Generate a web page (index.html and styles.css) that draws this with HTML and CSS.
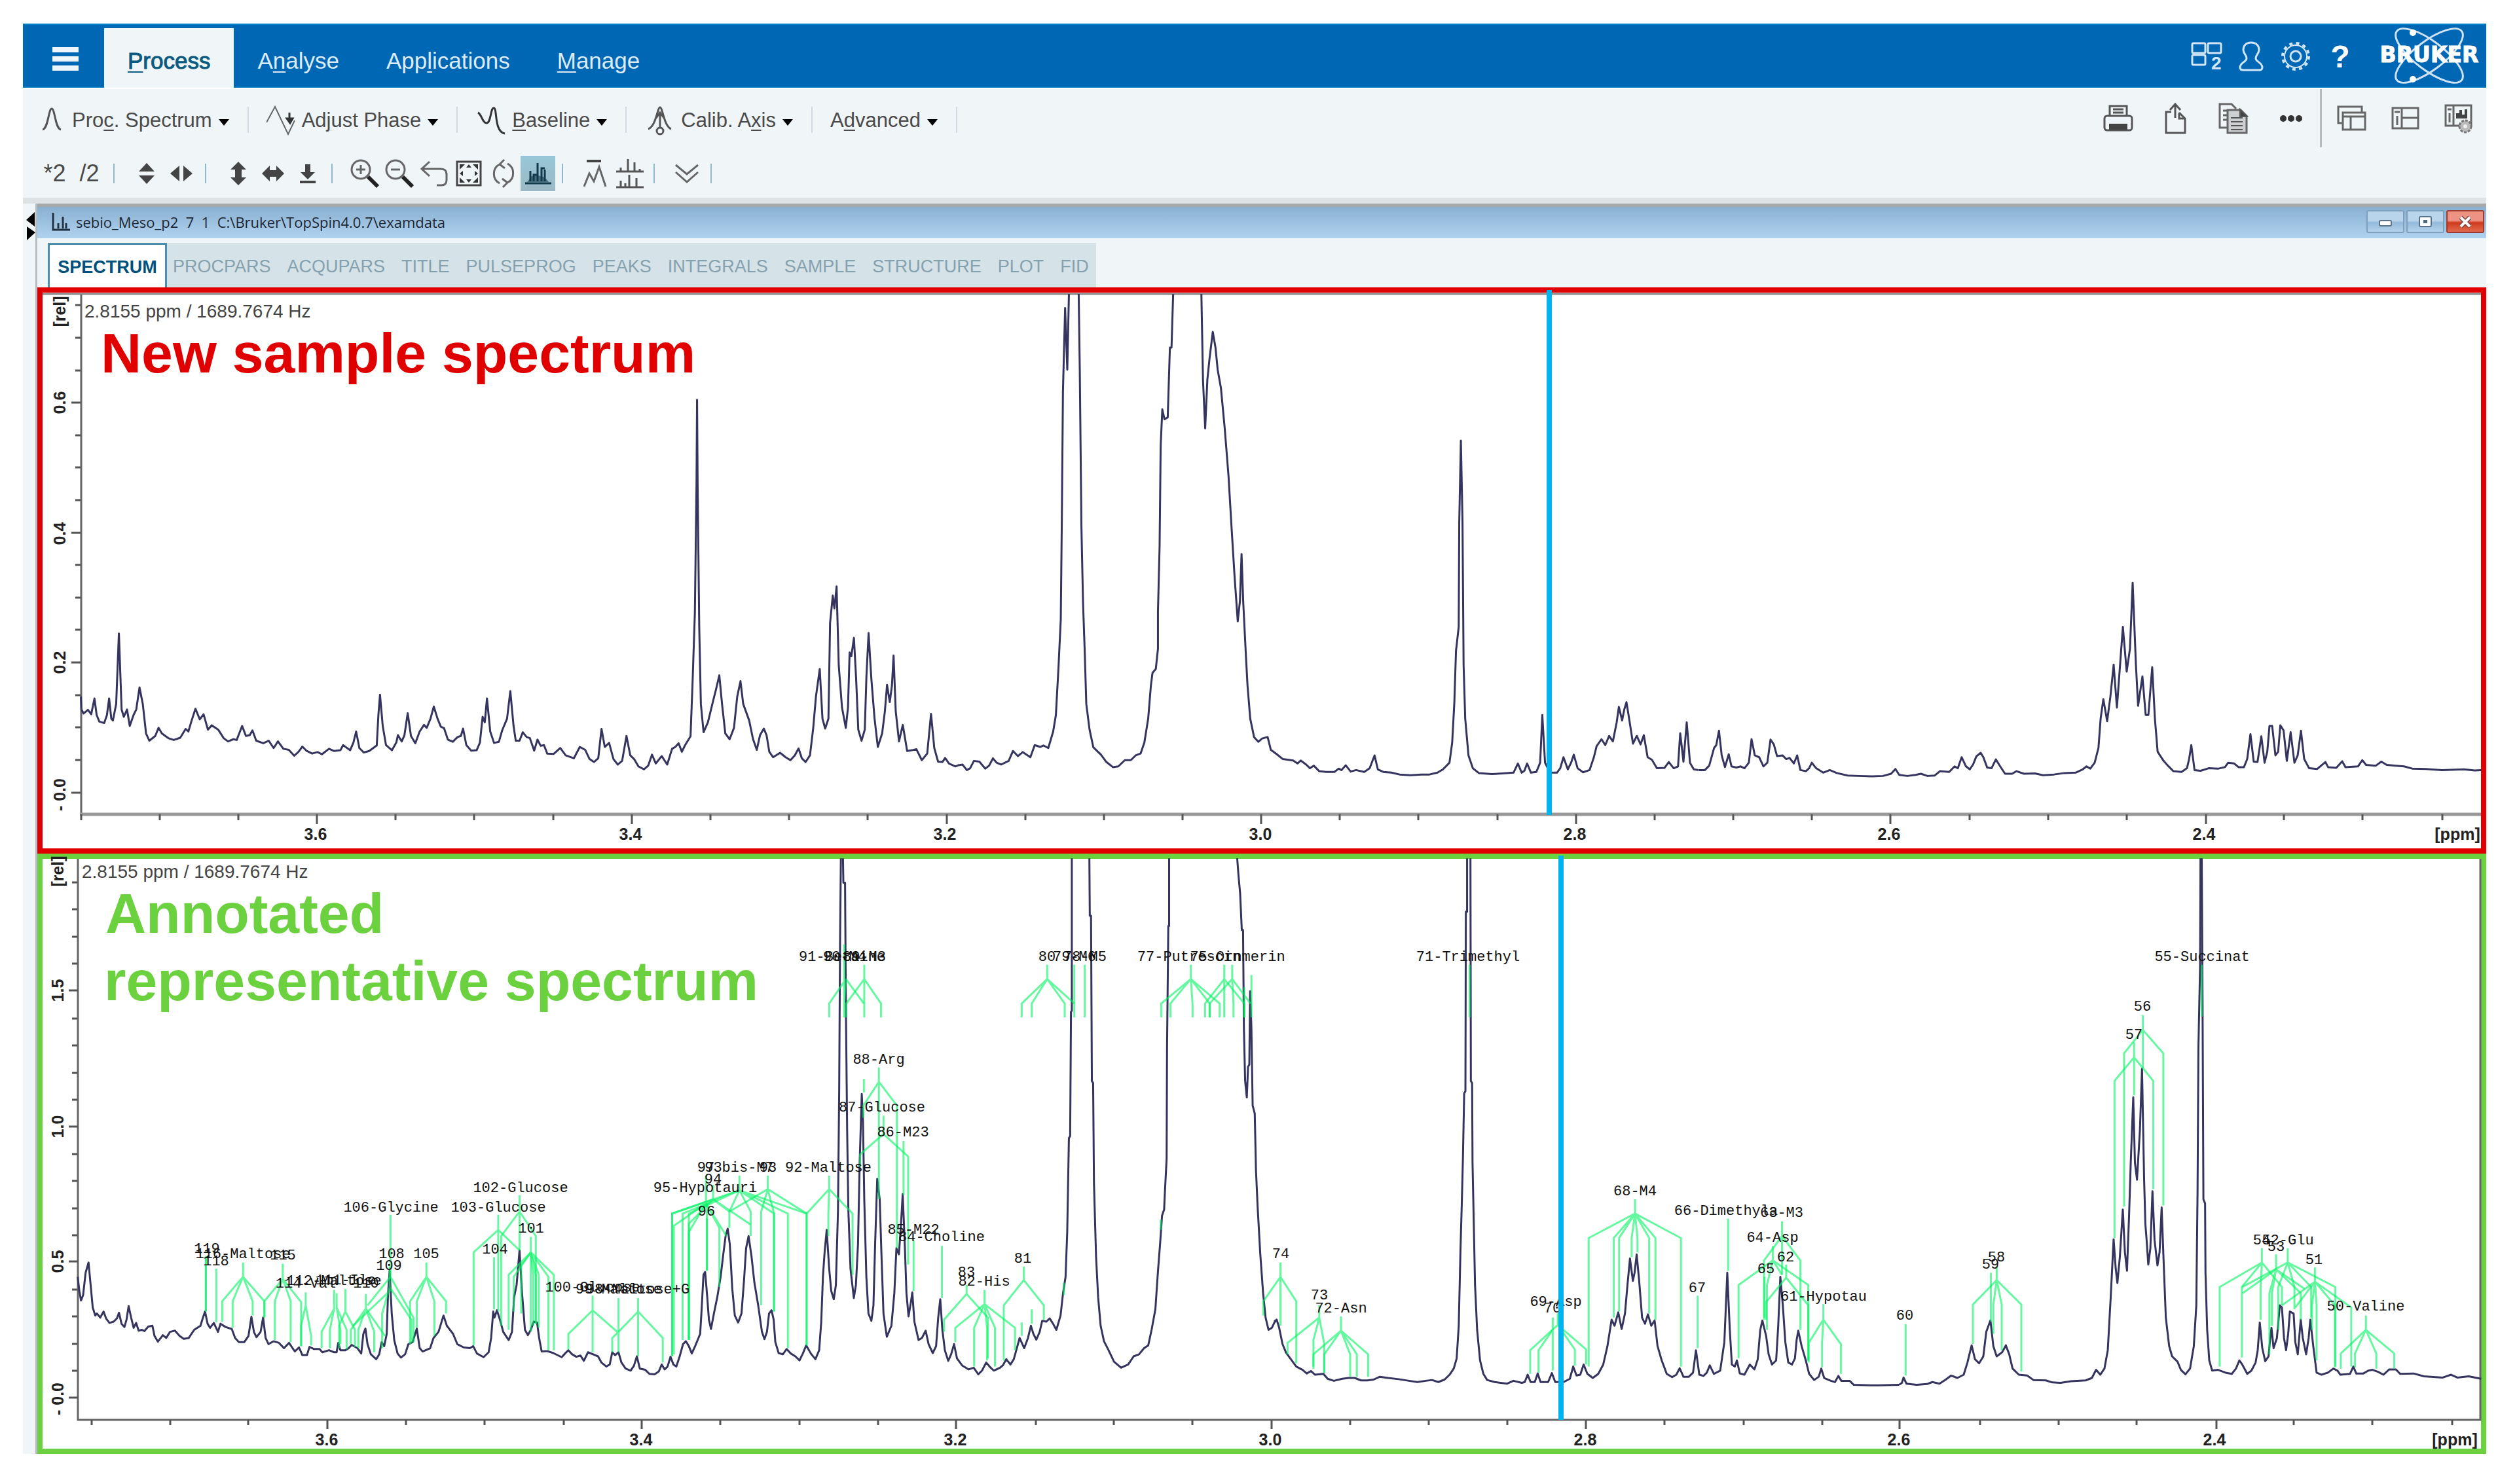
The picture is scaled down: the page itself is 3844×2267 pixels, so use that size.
FILE: index.html
```html
<!DOCTYPE html>
<html lang="en">
<head>
<meta charset="utf-8">
<title>TopSpin - sebio_Meso_p2</title>
<link rel="stylesheet" href="styles.css">
</head>
<body>
<div class="app">
  <header class="menubar">
    <button class="burger" aria-label="Menu"><span></span><span></span><span></span></button>
    <nav class="menu">
      <a href="#" class="menu-item active"><span><u>P</u>rocess</span></a>
      <a href="#" class="menu-item"><span>A<u>n</u>alyse</span></a>
      <a href="#" class="menu-item"><span>App<u>l</u>ications</span></a>
      <a href="#" class="menu-item"><span><u>M</u>anage</span></a>
    </nav>
    <div class="head-tools">
      <button class="head-btn" aria-label="Layouts"><svg width="48" height="50" viewBox="0 -3 48 50"><g fill="none" stroke="#d3e6f7" stroke-width="3"><rect x="2" y="2" width="20" height="15" rx="2"/><rect x="26" y="2" width="20" height="15" rx="2"/><rect x="2" y="20" width="20" height="15" rx="2"/></g><text x="31" y="42" class="badge-num">2</text></svg></button>
      <button class="head-btn" aria-label="User"><svg width="38" height="46" viewBox="0 0 38 46"><path d="M19 2c-8 0-12 5-12 11 0 6 5 8 5 13 0 6-10 6-10 14 0 3 2 4 5 4h24c3 0 5-1 5-4 0-8-10-8-10-14 0-5 5-7 5-13 0-6-4-11-12-11z" fill="none" stroke="#d3e6f7" stroke-width="3"/></svg></button>
      <button class="head-btn" aria-label="Settings"><svg width="46" height="46" viewBox="0 0 46 46"><g fill="none" stroke="#d3e6f7"><circle cx="23" cy="23" r="17" stroke-width="2"/><circle cx="23" cy="23" r="20" stroke-width="4" stroke-dasharray="5 5.47"/><circle cx="23" cy="23" r="8" stroke-width="3"/></g></svg></button>
      <button class="head-btn help" aria-label="Help">?</button>
      <svg class="logo" width="189" height="98" viewBox="0 0 189 98"><g fill="none" stroke="#cfe3f5" stroke-width="3"><ellipse cx="102" cy="48" rx="62" ry="22" transform="rotate(37 102 48)"/><ellipse cx="102" cy="48" rx="62" ry="22" transform="rotate(-37 102 48)"/></g><g fill="#fff"><circle cx="77" cy="13" r="5"/><circle cx="77" cy="84" r="5"/></g><text x="102" y="58" text-anchor="middle" class="brand">BRUKER</text></svg>
    </div>
  </header>

  <div class="toolbar">
    <div class="tool-row">
      <div class="commands">
        <button class="cmd first"><svg width="35" height="44" viewBox="0 0 35 44"><path d="M0 36c9-2 9-32 14-32s5 30 14 32" fill="none" stroke="#555" stroke-width="3"/></svg><span>Pro<u>c</u>. Spectrum</span><i class="caret"></i></button>
        <button class="cmd"><svg width="44" height="46" viewBox="0 0 44 46"><path d="M0 26L13 2 33 44 43 23" fill="none" stroke="#666" stroke-width="2"/><path d="M35 11v11M31 20h9l-4 7z" fill="#333" stroke="#333" stroke-width="3"/></svg><span>Ad<u>j</u>ust Phase</span><i class="caret"></i></button>
        <button class="cmd"><svg width="46" height="46" viewBox="0 0 46 46"><path d="M4 11C9 13 11 27 17 27 24 27 23 4 28 4c6 0 0 36 17 39" fill="none" stroke="#333" stroke-width="3"/></svg><span><u>B</u>aseline</span><i class="caret"></i></button>
        <button class="cmd"><svg width="46" height="46" viewBox="0 0 46 46"><path d="M6 36C18 32 20 3 24 3s6 29 17 33" fill="none" stroke="#555" stroke-width="3"/><path d="M24 10v26M18 19l6-8 6 8" fill="none" stroke="#555" stroke-width="3"/><circle cx="24" cy="39" r="5" fill="#f0f5f8" stroke="#555" stroke-width="3"/></svg><span>Calib. A<u>x</u>is</span><i class="caret"></i></button>
        <button class="cmd"><span>A<u>d</u>vanced</span><i class="caret"></i></button>
      </div>
      <div class="file-tools">
        <button class="icon-btn" aria-label="Print"><svg width="46" height="44" viewBox="0 0 46 44"><g fill="none" stroke="#555" stroke-width="3"><path d="M10 18V3h26v15M15 8h16M15 13h16"/><rect x="2" y="18" width="42" height="22" rx="4"/></g><rect x="9" y="30" width="28" height="9" fill="#444"/></svg></button>
        <button class="icon-btn" aria-label="Export"><svg width="36" height="50" viewBox="0 0 36 50"><path d="M11 15H3v32h29V25l-9-9M17 24V4M9 12l8-9 8 9M23 16v9h9" fill="none" stroke="#555" stroke-width="3"/></svg></button>
        <button class="icon-btn" aria-label="Copy"><svg width="46" height="48" viewBox="0 0 46 48"><path d="M14 38H2V2h18l7 7M7 12h8M7 19h6M7 26h6" fill="none" stroke="#666" stroke-width="3"/><path d="M14 11h20l9 9v26H14z" fill="#ccd0d2" stroke="#666" stroke-width="3"/><path d="M33 10l11 11H33zM19 23h18M19 29h18M19 35h18M19 41h18" fill="#444" stroke="#555" stroke-width="2"/></svg></button>
        <button class="icon-btn" aria-label="More"><svg width="34" height="12" viewBox="0 0 34 12"><g fill="#333"><circle cx="5" cy="6" r="5"/><circle cx="17" cy="6" r="5"/><circle cx="29" cy="6" r="5"/></g></svg></button>
      </div>
      <div class="window-tools">
        <button class="icon-btn" aria-label="Cascade"><svg width="46" height="40" viewBox="0 0 46 40"><g fill="none" stroke="#666" stroke-width="3"><path d="M8 27H2V2h36v9"/><rect x="9" y="11" width="34" height="26"/><path d="M9 17h34M21 17v20"/></g></svg></button>
        <button class="icon-btn" aria-label="Tile"><svg width="44" height="36" viewBox="0 0 44 36"><path d="M2 2h39v31H2zM16 2v31M16 17h25M5 8h8M9 14v14" fill="none" stroke="#666" stroke-width="3"/></svg></button>
        <button class="icon-btn" aria-label="Arrange"><svg width="46" height="48" viewBox="0 0 46 48"><path d="M2 4h39v31H2zM14 4v31M5 10h6M8 16v14" fill="none" stroke="#666" stroke-width="3"/><path d="M18 24v-8h5v-5h4v7h4v-8h4v14z" fill="#444"/><circle cx="32" cy="36" r="9" fill="#bbb" stroke="#777" stroke-width="3" stroke-dasharray="4 2"/><circle cx="32" cy="36" r="3" fill="#eee"/></svg></button>
      </div>
    </div>
    <div class="view-row">
      <div class="view-group">
        <button class="view-btn">*2</button><button class="view-btn">/2</button>
      </div>
      <div class="view-group">
        <button class="view-btn" aria-label="Scale vertical"><svg width="28" height="36" viewBox="0 0 28 36"><path d="M14 2l12 13H2zM14 34L2 21h24z" fill="#444"/></svg></button>
        <button class="view-btn" aria-label="Scale horizontal"><svg width="36" height="28" viewBox="0 0 36 28"><path d="M1 14L15 2v24zM35 14L21 2v24z" fill="#444"/></svg></button>
      </div>
      <div class="view-group">
        <button class="view-btn" aria-label="Fit height"><svg width="28" height="40" viewBox="0 0 28 40"><path d="M14 2l12 12h-7v12h7L14 38 2 26h7V14H2z" fill="#444"/></svg></button>
        <button class="view-btn" aria-label="Fit width"><svg width="36" height="28" viewBox="0 0 36 28"><path d="M1 14L13 2v7h10V2l12 12-12 12v-7H13v7z" fill="#444"/></svg></button>
        <button class="view-btn" aria-label="Baseline down"><svg width="28" height="30" viewBox="0 0 28 30"><path d="M10 1h8v12h7L14 24 3 13h7zM2 26h24v4H2z" fill="#444"/></svg></button>
      </div>
      <div class="view-group">
        <button class="view-btn" aria-label="Zoom in"><svg width="46" height="46" viewBox="0 0 46 46"><circle cx="17" cy="17" r="14" fill="none" stroke="#666" stroke-width="3"/><path d="M10 17h14M17 10v14" stroke="#666" stroke-width="3"/><path d="M28 28l15 15" stroke="#222" stroke-width="6"/></svg></button>
        <button class="view-btn" aria-label="Zoom out"><svg width="46" height="46" viewBox="0 0 46 46"><circle cx="17" cy="17" r="14" fill="none" stroke="#666" stroke-width="3"/><path d="M10 17h14" stroke="#666" stroke-width="3"/><path d="M28 28l15 15" stroke="#222" stroke-width="6"/></svg></button>
        <button class="view-btn" aria-label="Undo zoom"><svg width="44" height="42" viewBox="0 0 44 42"><path d="M15 3L3 14l12 11M3 14h28c8 0 10 3 10 9v8c0 6-3 8-8 8h-7" fill="none" stroke="#666" stroke-width="3"/></svg></button>
        <button class="view-btn" aria-label="Fit all"><svg width="40" height="40" viewBox="0 0 40 40"><rect x="2" y="2" width="36" height="36" fill="none" stroke="#444" stroke-width="3"/><path d="M6 6h8l-8 8zM34 6h-8l8 8zM34 34h-8l8-8zM6 34h8l-8-8zM16 11h8l-4-5zM16 29h8l-4 5zM11 16v8l-5-4zM29 16v8l5-4z" fill="#333"/></svg></button>
        <button class="view-btn" aria-label="Retain zoom"><svg width="36" height="46" viewBox="0 0 36 46"><path d="M24 8a15 16 0 0 1 0 29M12 38a15 16 0 0 1 0-29M19 2l-7 7 8 6M17 44l7-7-8-6" fill="none" stroke="#666" stroke-width="3"/></svg></button>
        <button class="view-btn on" aria-label="Show peaks"><svg width="42" height="36" viewBox="0 0 42 36"><path d="M1 33h40M9 30V14M20 30V2M31 30V12M14 30V20h6M26 30V10h5" fill="none" stroke="#123a4c" stroke-width="3"/><path d="M4 31c4-3 5-9 8-9l6-2 6 2c4 0 10 4 13 9z" fill="#123a4c" opacity=".6"/></svg></button>
      </div>
      <div class="view-group">
        <button class="view-btn" aria-label="Multiple display"><svg width="38" height="44" viewBox="0 0 38 44"><path d="M6 3h22" stroke="#444" stroke-width="4"/><path d="M2 42l8-20 7 12 8-22 10 30" fill="none" stroke="#666" stroke-width="3"/></svg></button>
        <button class="view-btn" aria-label="Stacked display"><svg width="44" height="46" viewBox="0 0 44 46"><path d="M1 20h42M1 44h42M19 20V1M29 20V6M8 20v-6M8 44V34M15 44V38M21 44V25M32 44V30M37 20v-4" fill="none" stroke="#555" stroke-width="3"/></svg></button>
      </div>
      <div class="view-group">
        <button class="view-btn" aria-label="More tools"><svg width="40" height="32" viewBox="0 0 40 32"><path d="M3 3l17 14L37 3M3 14l17 15 17-15" fill="none" stroke="#666" stroke-width="3"/></svg></button>
      </div>
    </div>
  </div>

  <div class="workspace">
    <div class="gutter"><svg width="16" height="46" viewBox="0 0 16 46"><path d="M14 2v22L1 14zM2 24l13 9L2 45z" fill="#000"/></svg></div>
    <main class="window">
      <div class="titlebar">
        <svg width="28" height="28" viewBox="0 0 28 28"><path d="M2 0v26h26M10 24V16M17 24V6M22 24v-8" fill="none" stroke="#234" stroke-width="3"/></svg>
        <span class="win-title">sebio_Meso_p2&nbsp; 7&nbsp; 1&nbsp; C:\Bruker\TopSpin4.0.7\examdata</span>
        <button class="win-btn" aria-label="Minimise"><svg width="22" height="20" viewBox="0 0 22 20"><rect x="2" y="8" width="18" height="8" rx="2" fill="#fff" stroke="#5b7186" stroke-width="2"/></svg></button>
        <button class="win-btn" aria-label="Restore"><svg width="22" height="20" viewBox="0 0 22 20"><rect x="2" y="2" width="18" height="15" rx="2" fill="#fff" stroke="#5b7186" stroke-width="2"/><rect x="8" y="7" width="6" height="5" fill="#4e6a86"/></svg></button>
        <button class="win-btn close" aria-label="Close"><svg width="24" height="20" viewBox="0 0 24 20"><path d="M5 3l14 14M19 3L5 17" stroke="#7a4444" stroke-width="7"/><path d="M5 3l14 14M19 3L5 17" stroke="#fff" stroke-width="4"/></svg></button>
      </div>
      <nav class="tabs">
        <a href="#" class="tab current">SPECTRUM</a>
        <div class="tab-rest">
          <a href="#" class="tab">PROCPARS</a><a href="#" class="tab">ACQUPARS</a><a href="#" class="tab">TITLE</a><a href="#" class="tab">PULSEPROG</a><a href="#" class="tab">PEAKS</a><a href="#" class="tab">INTEGRALS</a><a href="#" class="tab">SAMPLE</a><a href="#" class="tab">STRUCTURE</a><a href="#" class="tab">PLOT</a><a href="#" class="tab">FID</a>
        </div>
      </nav>

      <section class="pane sample">
        <svg class="plot" viewBox="65 447 3724 849" role="img" aria-label="New sample spectrum">
          <path class="shade" d="M65 449H3789"/>
          <path class="frame-line" d="M124 450V1244"/>
          <path class="base-line" d="M122 1244H3789"/>
          <path class="tick" d="M109 615h14M109 814h14M109 1012h14M109 1211h14M115 466h8M115 516h8M115 566h8M115 665h8M115 714h8M115 764h8M115 863h8M115 913h8M115 962h8M115 1062h8M115 1111h8M115 1161h8"/>
          <path class="tick" d="M484 1244v15M965 1244v15M1446 1244v15M1926 1244v15M2407 1244v15M2887 1244v15M3369 1244v15M124 1244v9M244 1244v9M364 1244v9M604 1244v9M724 1244v9M845 1244v9M1085 1244v9M1205 1244v9M1325 1244v9M1566 1244v9M1686 1244v9M1806 1244v9M2046 1244v9M2166 1244v9M2287 1244v9M2527 1244v9M2647 1244v9M2767 1244v9M3008 1244v9M3128 1244v9M3248 1244v9M3488 1244v9M3608 1244v9M3730 1244v9"/>
          <g class="axis">
            <text x="482" y="1283">3.6</text><text x="963" y="1283">3.4</text><text x="1443" y="1283">3.2</text><text x="1925" y="1283">3.0</text><text x="2405" y="1283">2.8</text><text x="2885" y="1283">2.6</text><text x="3366" y="1283">2.4</text><text x="3753" y="1283">[ppm]</text>
            <text transform="translate(100 476) rotate(-90)">[rel]</text><text transform="translate(100 615) rotate(-90)">0.6</text><text transform="translate(100 815) rotate(-90)">0.4</text><text transform="translate(100 1012) rotate(-90)">0.2</text><text transform="translate(100 1214) rotate(-90)">- 0.0</text>
          </g>
          <g class="trace">
            <g transform="translate(0 430) scale(.8291 .5612)"><polyline points="149,1130 150,1165 154,1176 162,1166 168,1178 174,1135 178,1180 183,1198 192,1202 197,1180 201,1135 205,1190 208,1195 214,1150 219,958 224,1165 228,1185 234,1165 239,1210 246,1180 251,1165 257,1105 263,1150 269,1230 275,1250 286,1237 292,1215 298,1230 310,1243 320,1248 332,1242 342,1218 347,1225 352,1200 360,1163 368,1192 375,1178 383,1220 390,1208 402,1220 412,1243 420,1252 430,1246 436,1248 446,1210 453,1237 460,1235 465,1222 472,1250 485,1257 495,1250 504,1270 512,1252 522,1272 532,1275 542,1291 550,1280 557,1266 565,1278 575,1285 585,1281 593,1287 606,1272 615,1278 627,1276 632,1262 645,1276 651,1255 656,1225 662,1270 670,1282 680,1278 694,1263 697,1180 700,1125 705,1210 711,1262 722,1276 730,1255 733,1235 740,1252 745,1235 751,1175 757,1237 765,1257 773,1225 781,1207 786,1215 793,1190 799,1157 806,1190 812,1212 818,1216 825,1247 834,1253 843,1240 849,1237 853,1217 859,1262 868,1277 878,1276 884,1255 889,1185 893,1200 897,1135 903,1225 910,1256 919,1253 925,1222 934,1190 940,1115 946,1210 950,1250 957,1250 963,1227 970,1240 976,1243 984,1277 990,1247 996,1264 1002,1262 1008,1285 1020,1286 1032,1270 1042,1290 1057,1298 1068,1267 1078,1275 1086,1300 1094,1308 1102,1298 1108,1218 1114,1267 1122,1256 1130,1300 1138,1315 1146,1305 1154,1237 1161,1290 1168,1300 1176,1320 1186,1328 1194,1318 1201,1288 1208,1312 1219,1292 1229,1315 1238,1272 1244,1267 1250,1257 1256,1280 1262,1262 1272,1238 1276,1080 1280,900 1283,548 1284,322 1285,548 1288,940 1291,1150 1296,1227 1304,1200 1313,1145 1319,1110 1325,1072 1330,1150 1336,1230 1344,1246 1352,1215 1358,1130 1364,1088 1369,1150 1380,1195 1387,1245 1394,1275 1400,1235 1407,1217 1412,1235 1417,1280 1424,1295 1437,1283 1447,1295 1456,1303 1464,1290 1471,1271 1477,1298 1484,1308 1492,1290 1498,1215 1503,1130 1510,1055 1515,1190 1520,1217 1526,1190 1529,930 1534,855 1537,890 1541,830 1545,1045 1551,1160 1558,1215 1562,1160 1565,1010 1568,1022"/></g>
            <g transform="translate(1300 430) scale(.8291 .5612)"><polyline points="0,1022 5,970 9,1080 13,1220 19,1250 25,1220 28,1075 32,957 37,1080 43,1190 49,1267 57,1230 62,1170 66,1098 71,1145 75,1100 78,1018 82,1170 88,1252 95,1207 103,1278 112,1276 120,1273 130,1303 140,1285 147,1177 153,1270 160,1307 168,1308 173,1297 180,1312 192,1320 197,1317 205,1315 213,1330 219,1325 226,1305 236,1307 247,1326 254,1318 261,1298 268,1310 276,1315 290,1305 298,1278 307,1292 316,1281 330,1295 338,1262 348,1267 354,1263 363,1270 372,1225 377,1180 382,1045 386,920 388,640 390,300 394,72 398,240 401,34"/><polyline points="419,34 421,240 424,665 427,875 430,1002 433,1150 439,1220 446,1268 460,1288 470,1308 482,1322 492,1320 504,1303 515,1303 524,1290 533,1285 540,1255 547,1190 552,1100 555,1065 561,1055 565,1000 565,900 568,722 570,448 573,348 577,375 583,370 587,180 590,180 593,34"/><polyline points="645,34 648,270 652,400 656,268 660,210 666,137 671,180 675,240 681,290 688,400 695,530 701,680 706,800 712,925 716,870 719,742 722,870 727,1018 730,1100 735,1190 742,1240 750,1253 757,1244 767,1240 773,1275 784,1287 795,1300 814,1304 822,1312 828,1304 838,1315 845,1325 852,1318 862,1333 875,1335 890,1335 898,1326 903,1330 911,1317 920,1334 930,1330 945,1335 955,1325 964,1290 970,1328 980,1335 995,1337 1010,1342 1030,1344 1050,1342 1065,1342 1080,1337 1090,1328 1102,1310 1107,1255 1111,1145 1114,1005 1116,980 1119,940 1120,655 1123,433 1126,655 1128,1045 1131,1190 1137,1290 1145,1325 1156,1338 1180,1341 1200,1339 1220,1337 1228,1312 1235,1337 1240,1332 1245,1312 1252,1337 1262,1335 1269,1310 1273,1180 1278,1310 1287,1337 1300,1337 1306,1325 1312,1295 1320,1328 1326,1310 1331,1288 1338,1325 1348,1336 1360,1330 1368,1295 1373,1265 1382,1246 1389,1262 1396,1237 1403,1252 1410,1200 1414,1158 1420,1195 1424,1165 1428,1145 1434,1200 1440,1258 1447,1237 1454,1260 1460,1235 1467,1295 1475,1302 1484,1325 1498,1324 1506,1308 1515,1325 1523,1320 1527,1230 1533,1307 1539,1200 1545,1310 1552,1328 1560,1330"/></g>
            <g transform="translate(2544 430) scale(.8291 .5612)"><polyline points="60,1330 72,1330 80,1318 89,1270 93,1262 98,1223 103,1290 109,1322 116,1287 121,1320 130,1323 138,1320 145,1325 153,1310 158,1246 164,1290 172,1295 180,1320 187,1310 193,1247 199,1260 205,1292 215,1290 222,1300 228,1297 236,1312 242,1290 248,1330 258,1333 264,1325 269,1310 277,1325 290,1337 302,1330 315,1338 335,1345 355,1346 380,1347 400,1346 415,1340 423,1327 430,1343 445,1346 460,1343 470,1340 482,1346 495,1345 505,1333 522,1335 532,1320 538,1325 545,1295 553,1320 560,1328 566,1315 572,1293 580,1283 585,1295 592,1323 600,1325 608,1301 616,1320 625,1340 638,1340 646,1333 660,1340 680,1339 695,1344 715,1342 735,1338 755,1337 768,1328 775,1320 782,1326 790,1310 797,1270 801,1190 806,1137 813,1197 819,1130 825,1043 831,1160 837,1040 842,940 849,1062 855,1000 860,820 866,1043 870,1155 878,1075 884,1180 889,1180 896,1050 901,1190 906,1280 917,1305 925,1318 935,1333 950,1335 960,1325 964,1300 968,1262 974,1330 985,1332 1000,1325 1018,1326 1030,1322 1036,1310 1047,1312 1055,1322 1065,1322 1071,1300 1077,1232 1083,1307 1090,1308 1097,1238 1103,1310 1108,1280 1112,1210 1117,1210 1123,1290 1128,1280 1132,1208 1138,1222 1144,1305 1151,1227 1158,1310 1164,1290 1170,1223 1176,1300 1185,1325 1200,1327 1215,1308 1220,1322 1235,1324 1246,1306 1252,1322 1275,1320 1283,1303 1290,1316 1308,1318 1318,1307 1328,1316 1345,1318 1360,1320 1375,1326 1400,1327 1430,1330 1470,1328 1490,1331 1502,1330"/></g>
          </g>
          <path class="cursor" d="M2366 443V1245"/>
          <text class="readout" x="129" y="485">2.8155 ppm / 1689.7674 Hz</text>
          <text class="caption" x="154" y="569">New sample spectrum</text>
        </svg>
      </section>

      <section class="pane annotated">
        <svg class="plot" viewBox="65 1312 3724 901" role="img" aria-label="Annotated representative spectrum">
          <path class="frame-line" d="M119 1312V2169H3788V1312"/>
          <path class="tick" d="M105 1513h14M105 1721h14M105 1927h14M105 2135h14M110 1348h8M110 1389h8M110 1431h8M110 1472h8M110 1556h8M110 1597h8M110 1639h8M110 1680h8M110 1763h8M110 1804h8M110 1846h8M110 1887h8M110 1970h8M110 2011h8M110 2053h8M110 2094h8"/>
          <path class="tick" d="M500 2169v14M980 2169v14M1460 2169v14M1942 2169v14M2422 2169v14M2901 2169v14M3385 2169v14M140 2169v8M260 2169v8M379 2169v8M620 2169v8M740 2169v8M861 2169v8M1100 2169v8M1221 2169v8M1341 2169v8M1582 2169v8M1701 2169v8M1821 2169v8M2062 2169v8M2182 2169v8M2302 2169v8M2542 2169v8M2663 2169v8M2783 2169v8M3024 2169v8M3144 2169v8M3263 2169v8M3503 2169v8M3623 2169v8M3745 2169v8"/>
          <g class="axis">
            <text x="499" y="2208">3.6</text><text x="979" y="2208">3.4</text><text x="1459" y="2208">3.2</text><text x="1940" y="2208">3.0</text><text x="2421" y="2208">2.8</text><text x="2900" y="2208">2.6</text><text x="3382" y="2208">2.4</text><text x="3749" y="2208">[ppm]</text>
            <text transform="translate(97 1331) rotate(-90)">[rel]</text><text transform="translate(97 1513) rotate(-90)">1.5</text><text transform="translate(97 1721) rotate(-90)">1.0</text><text transform="translate(97 1927) rotate(-90)">0.5</text><text transform="translate(97 2137) rotate(-90)">- 0.0</text>
          </g>
          <g class="trace">
            <g transform="translate(0 1290) scale(.6378 .6231)"><polyline points="186,1060 190,1095 194,1118 199,1105 205,1050 212,1025 217,1080 222,1135 228,1155 232,1150 240,1160 248,1145 254,1162 262,1173 272,1170 280,1162 285,1148 291,1175 298,1183 303,1165 308,1132 314,1160 320,1185 326,1173 332,1192 340,1190 346,1193 355,1182 365,1180 370,1205 378,1219 390,1203 398,1210 407,1195 419,1192 430,1205 440,1212 452,1210 465,1190 480,1180 486,1160 491,1145 497,1175 503,1185 512,1173 522,1195 528,1175 540,1183 555,1188 563,1210 572,1220 585,1220 595,1205 602,1158 608,1195 614,1208 624,1195 630,1160 636,1210 643,1225 655,1218 668,1222 680,1235 692,1222 706,1243 716,1233 724,1252 735,1252 741,1232 752,1237 765,1237 772,1245 788,1240 800,1245 806,1245 810,1222 815,1240 827,1240 835,1235 842,1227 856,1235 865,1248 870,1200 875,1187 880,1225 888,1250 901,1262 908,1250 914,1220 920,1230 926,1200 929,1105 933,1045 938,1150 944,1215 952,1248 960,1258 970,1250 978,1225 988,1220 998,1187 1005,1235 1012,1243 1030,1235 1038,1210 1050,1195 1062,1155 1070,1180 1085,1200 1095,1225 1110,1233 1125,1235 1133,1230 1142,1248 1158,1257 1170,1245 1176,1210 1181,1145 1184,1160 1190,1142 1197,1165 1205,1195 1218,1215 1226,1195 1231,1110 1237,1080 1244,995 1250,1100 1257,1190 1264,1203 1271,1190 1278,1170 1286,1172 1291,1210 1297,1243 1310,1242 1325,1247 1345,1257 1353,1248 1361,1240 1370,1250 1380,1256 1390,1253 1398,1266 1408,1245 1420,1250 1432,1255 1440,1270 1452,1280 1460,1275 1466,1245 1473,1252 1481,1245 1488,1270 1498,1285 1510,1290 1518,1278 1525,1255 1532,1285 1545,1288 1555,1298 1568,1299"/></g>
            <g transform="translate(950 1290) scale(.6378 .6231)"><polyline points="78,1299 88,1292 95,1275 102,1287 109,1280 116,1256 123,1275 130,1280 138,1255 146,1225 153,1218 160,1230 167,1248 175,1230 187,1200 190,1150 195,1055 199,1048 204,1110 208,1165 213,1188 220,1150 228,1110 236,1060 243,1000 248,960 253,942 258,980 264,1090 270,1155 278,1172 286,1150 292,1070 297,990 303,960 310,1010 317,1075 326,1130 335,1195 341,1213 347,1195 352,1150 358,1142 363,1165 367,1220 375,1247 385,1250 394,1237 404,1248 415,1255 425,1265 433,1248 441,1228 452,1248 463,1262 472,1240 477,1170 481,1060 485,1000 490,945 496,1040 501,1095 507,1115 512,1080 517,900 520,600 522,240 524,34"/><polyline points="529,34 530,94 534,94 536,400 539,700 542,900 547,1040 555,1112 560,1080 565,980 569,780 574,612 577,680 580,870 585,1060 590,1150 597,1168 602,1130 606,980 611,820 617,870 621,1000 626,1150 634,1207 645,1180 652,1100 657,990 663,1005 668,930 672,857 677,980 681,1100 686,1157 692,1120 695,1098 700,1170 710,1215 718,1210 727,1192 734,1225 744,1247 752,1230 757,1160 762,1115 767,1190 773,1240 781,1266 788,1250 795,1225 802,1260 815,1278 830,1287 842,1283 853,1299 862,1290 872,1270 880,1280 890,1290 905,1283 912,1277 920,1262 930,1275 938,1262 944,1240 952,1210 963,1235 972,1210 979,1180 985,1200 992,1214 1000,1195 1006,1168 1016,1170 1024,1162 1032,1175 1040,1190 1050,1155 1056,1100 1062,1060 1066,950 1070,720 1073,715 1075,410 1077,408 1077,34"/><polyline points="1119,34 1120,175 1123,175 1125,580 1128,585 1130,830 1135,1010 1140,1110 1146,1180 1154,1218 1165,1240 1178,1268 1195,1283 1212,1275 1225,1255 1238,1250 1250,1235 1260,1228 1268,1190 1277,1140 1283,1050 1289,970 1293,910 1298,895 1300,850 1304,770 1305,500 1308,200 1310,200 1310,34"/><polyline points="1473,34 1476,75 1480,120 1484,210 1487,210 1489,450 1492,580 1496,620 1499,545 1502,540 1504,360 1507,450 1510,640 1515,660 1518,800 1522,890 1528,1000 1535,1100 1541,1160 1548,1190 1556,1185 1562,1172 1568,1165"/></g>
            <g transform="translate(1900 1290) scale(.6378 .6231)"><polyline points="72,1170 78,1165 84,1185 92,1225 100,1245 112,1262 125,1280 140,1288 150,1297 160,1291 170,1300 190,1298 200,1310 215,1315 235,1310 250,1308 265,1308 280,1314 295,1314 310,1312 325,1305 345,1308 370,1311 395,1315 415,1318 435,1315 450,1313 465,1318 480,1312 492,1300 502,1285 509,1260 514,1180 518,1000 521,890 524,770 527,610 530,605 531,165 534,165 534,34"/><polyline points="542,34 543,580 546,585 547,780 550,930 553,1080 558,1190 565,1265 573,1298 582,1313 600,1318 630,1322 645,1315 665,1320 672,1318 679,1300 686,1318 696,1318 703,1297 710,1318 728,1318 737,1296 745,1318 765,1318 780,1310 788,1280 796,1302 805,1300 813,1275 822,1298 835,1308 848,1298 860,1275 870,1230 880,1165 887,1180 896,1147 904,1188 912,1150 918,1080 924,1015 931,1070 935,1050 940,1005 946,1070 953,1160 960,1175 967,1152 975,1180 983,1167 990,1230 1000,1265 1012,1298 1025,1306 1035,1300 1043,1284 1052,1305 1065,1305 1075,1295 1082,1240 1090,1300 1100,1303 1108,1295 1115,1277 1125,1298 1140,1290 1150,1220 1157,1050 1163,1190 1168,1275 1175,1280 1180,1265 1187,1297 1198,1300 1211,1275 1222,1287 1230,1262 1236,1190 1241,1167 1250,1205 1256,1250 1264,1275 1274,1265 1279,1180 1284,1060 1290,1130 1296,1220 1303,1270 1312,1275 1319,1260 1323,1215 1327,1192 1335,1230 1345,1265 1353,1298 1365,1313 1376,1305 1382,1285 1389,1308 1405,1315 1415,1318 1423,1303 1430,1315 1450,1315 1460,1325 1500,1326 1520,1326 1568,1325"/></g>
            <g transform="translate(2844 1290) scale(.6378 .6231)"><polyline points="88,1325 95,1320 99,1307 106,1322 130,1325 155,1323 168,1318 185,1322 200,1312 213,1302 228,1308 243,1300 252,1270 262,1228 270,1262 280,1272 290,1255 297,1195 307,1167 314,1230 322,1255 335,1245 344,1228 352,1250 360,1285 375,1300 395,1302 410,1313 440,1314 455,1319 475,1320 500,1316 535,1314 550,1308 560,1288 570,1300 580,1285 588,1240 595,1110 602,968 607,1040 611,1075 617,1010 624,895 629,1000 634,1045 639,910 643,780 649,620 653,780 658,822 665,700 670,550 675,820 678,930 681,970 685,1030 690,990 695,850 700,970 707,1032 712,1000 717,890 722,1030 727,1160 735,1230 742,1255 755,1268 763,1288 774,1299 785,1285 794,1230 800,1130 803,850 805,500 809,300 810,34"/><polyline points="813,34 815,400 817,870 821,880 822,1050 826,1190 831,1265 838,1290 852,1288 870,1295 885,1298 895,1285 903,1265 910,1275 922,1298 932,1290 942,1270 947,1240 952,1172 958,1235 965,1267 973,1255 977,1210 980,1185 985,1235 993,1210 1000,1130 1005,1135 1010,1210 1015,1240 1020,1200 1024,1145 1033,1150 1037,1220 1043,1250 1050,1165 1055,1210 1063,1250 1069,1210 1073,1165 1080,1230 1088,1295 1100,1300 1115,1295 1128,1285 1138,1290 1145,1300 1168,1298 1176,1280 1183,1297 1200,1297 1212,1290 1222,1288 1235,1293 1248,1300 1262,1287 1278,1287 1288,1298 1320,1297 1345,1304 1390,1307 1410,1300 1425,1307 1452,1304 1482,1310"/></g>
          </g>
          <g class="trees">
            <g transform="translate(0 1290) scale(.6378 .6231)">
              <path d="M493 1010V1145"/><path d="M493 1010V1145M518 1040V1172"/>
              <path d="M582 1025V1060L532 1120V1170M582 1060L557 1120V1185M582 1060L605 1120V1155M582 1060L633 1120V1160"/>
              <path d="M677 1028V1065L633 1120V1160M677 1065L658 1120V1215M677 1065L696 1120V1220M677 1065L721 1122V1230"/>
              <path d="M732 1098V1130L721 1180V1230M732 1130L745 1205V1228"/>
              <path d="M800 1092V1138L770 1195V1235M800 1138L790 1190V1235"/><path d="M806 1100V1135L815 1190V1225M806 1135L830 1190V1238"/>
              <path d="M827 1090V1145L812 1180V1235M827 1145L850 1190V1232"/>
              <path d="M876 1102V1138L840 1190V1225M876 1138L858 1190V1235M876 1138L896 1195V1245M876 1138L922 1205"/>
              <path d="M935 908V1060L880 1130M935 1060L990 1160V1220"/><path d="M933 1035V1095L845 1180M933 1085L915 1150V1235M933 1085L985 1165V1222"/>
              <path d="M1021 1025V1060L982 1120V1225M1021 1060L998 1120V1185M1021 1060L1040 1120V1205M1021 1060L1068 1120V1150"/>
              <path d="M1193 908V945L1134 1000V1228M1193 945V1145M1193 945L1244 995"/>
              <path d="M1244 860V900L1200 960V1180M1244 900V995M1244 900L1283 960V1175M1183 1012V1140"/>
              <path d="M1271 962V1000L1218 1055V1190M1271 1000L1248 1030V1150M1271 1000V1195M1271 1000L1290 1055V1185M1271 1000L1313 1060V1240M1271 1000L1326 1055V1240"/><path d="M1271 1000L1230 1060V1145M1271 1000L1277 1055V1180M1271 1000L1283 1055V1175"/>
              <path d="M1419 1106V1142L1361 1200V1238M1419 1142V1245M1419 1142L1478 1195"/><path d="M1481 1112V1245M1481 1195L1466 1210V1245"/>
              <path d="M1528 1112V1145L1481 1195M1528 1145V1255M1528 1145L1587 1210V1270"/>
            </g>
            <g transform="translate(950 1290) scale(.6378 .6231)">
              <path d="M496 812V845L442 905V1228M496 845L494 905V960M496 845L552 905V1055"/>
              <path d="M349 812V845L257 900V940M349 845L333 900V1130M349 845L364 905V1145M349 845L442 905V1228"/>
              <path d="M281 812V848L145 905V1215M281 848L160 905V1215M281 848L257 900M281 848L308 900V960M281 848L364 905V1145M281 848L397 905V1235M281 848L442 905"/>
              <path d="M218 835V870L120 905V1255M218 870L160 930V1215M218 870L257 900M218 870L308 932"/>
              <path d="M201 812V880L124 935V1250M201 880L160 950V1215M201 880L233 940V1085M201 880L250 960M281 848L120 905V1255"/><path d="M203 880V1045"/><path d="M203 915V1045"/>
              <path d="M532 245V424M536 330L496 390V424M536 330L532 390V424M536 330L579 390"/><path d="M580 295V330L537 390V424M580 330V424M580 330L620 390V424"/>
              <path d="M1018 295V330L957 390V424M1018 330L981 390V424M1018 330L1060 390V424M1018 330L1083 390"/><path d="M1083 295V424M1108 295V424"/>
              <path d="M1362 295V330L1291 390V424M1362 330L1313 390V424M1362 330L1366 390V424M1362 330L1407 390V424M1362 330L1431 390V424"/>
              <path d="M1442 295V330L1396 390V424M1442 330V424M1442 330L1490 390V424"/><path d="M1461 295V330L1407 390V424M1461 330L1464 390V424M1461 330L1505 390M1490 350V424"/><path d="M1507 320V424"/>
              <path d="M615 547V582L578 640V670M615 582V870M615 582L658 640V990M579 575V608"/><path d="M626 665V710L570 760V790M626 710L685 765V1030"/>
              <path d="M674 727V860M698 970V1095M766 984V1112"/>
              <path d="M825 1080V1102L771 1165V1195M825 1102L876 1160V1260"/>
              <path d="M868 1092V1127L798 1185V1220M868 1127L843 1185V1280M868 1127L874 1185V1265M868 1127L893 1185V1280M868 1127L941 1185V1240"/>
              <path d="M962 1035V1068L914 1130V1265M962 1068L1010 1130V1165M981 1140V1175M957 1172V1205M1058 1075V1105M1290 920V945"/>
            </g>
            <g transform="translate(1900 1290) scale(.6378 .6231)">
              <path d="M87 1025V1060L46 1120V1155M87 1060V1180M87 1060L125 1120V1272"/>
              <path d="M180 1130V1160L104 1222V1250M180 1160L166 1215V1280M180 1160L192 1225V1295"/><path d="M232 1157V1192L166 1250V1285M232 1192L192 1250V1295M232 1192L254 1250V1305M232 1192L270 1250V1305M232 1192L297 1250V1305"/>
              <path d="M540 295V424"/>
              <path d="M739 1160V1190L705 1240V1295M739 1190V1290"/><path d="M751 1150V1178L685 1240V1298M751 1178L792 1238V1278M751 1178L819 1238V1275"/>
              <path d="M936 870V905L825 965V1280M936 905L885 965V1160M936 905L898 965V1145M936 905L928 965V1012M936 905L942 965V1000M936 905L970 965V1150M936 905L985 965V1165M936 905L1046 965V1280"/>
              <path d="M1086 1106V1235M1159 917V1045"/>
              <path d="M1288 924V960L1245 1020V1165M1288 960V1055M1288 960L1332 1020V1190"/><path d="M1266 985V1020L1184 1080V1260M1266 1020L1252 1080V1190M1266 1020L1288 1055M1266 1020L1351 1080V1265"/>
              <path d="M1298 1030V1062L1250 1122V1165M1298 1062L1351 1130V1265M1246 1060V1160"/>
              <path d="M1387 1127V1165L1352 1222V1270M1387 1165L1384 1222V1282M1387 1165L1429 1225V1298"/>
            </g>
            <g transform="translate(2844 1290) scale(.6378 .6231)">
              <path d="M104 1176V1302"/>
              <path d="M322 1035V1068L265 1128V1225M322 1068L314 1128V1200M322 1068L334 1128V1240M322 1068L381 1128V1292"/><path d="M308 1050V1170"/>
              <path d="M672 418V455L627 512V888M672 455V548M672 455L721 512V885"/><path d="M651 485V522L604 580V965M651 522V615M651 522L697 580V845"/>
              <path d="M813 295V422"/>
              <path d="M957 990V1025L856 1085V1280M957 1025L909 1085V1258M957 1025L954 1085V1165M957 1025L1005 1085V1130"/>
              <path d="M991 1005V1042L911 1100M991 1042L975 1100V1250M991 1042L981 1100V1180M991 1042L1050 1100V1165M991 1042L1060 1090"/>
              <path d="M1019 990V1025L910 1085M1019 1025L996 1085V1190M1019 1025L1035 1085V1140M1019 1025L1075 1085V1160M1019 1025L1133 1085V1280"/>
              <path d="M1084 1037V1072L1005 1130M1084 1072L1037 1135M1084 1072L1077 1130V1190M1084 1072L1088 1130V1265M1084 1072L1132 1130V1282M1084 1072L1171 1135V1280"/>
              <path d="M1206 1155V1190L1146 1248V1285M1206 1190L1180 1248V1282M1206 1190L1231 1248V1285M1206 1190L1274 1248V1285"/>
            </g>
          </g>
          <g class="peaks">
            <text x="316" y="1914">119</text><text x="330" y="1933">118</text><text x="371" y="1922">116-Maltose</text><text x="432" y="1924">115</text>
            <text x="467" y="1967">114-Val</text><text x="510" y="1963">112-Maltose</text><text x="528" y="1962">111-Ile</text><text x="559" y="1967">110</text>
            <text x="598" y="1922">108</text><text x="594" y="1940">109</text><text x="651" y="1922">105</text>
            <text x="597" y="1851">106-Glycine</text><text x="761" y="1851">103-Glucose</text><text x="795" y="1821">102-Glucose</text><text x="811" y="1883">101</text><text x="756" y="1915">104</text>
            <text x="905" y="1973">100-Glucose</text><text x="945" y="1976">99-Maltose</text><text x="974" y="1976">98-Maltose+G</text>
            <text x="1078" y="1790">97</text><text x="1129" y="1790">93bis-M7</text><text x="1173" y="1790">93</text><text x="1265" y="1790">92-Maltose</text><text x="1089" y="1808">94</text><text x="1077" y="1821">95-Hypotauri</text><text x="1079" y="1857">96</text>
            <text x="1286" y="1468">91-Betaine</text><text x="1290" y="1468">90-M4</text><text x="1320" y="1468">89-M3</text>
            <text x="1342" y="1625">88-Arg</text><text x="1347" y="1698">87-Glucose</text><text x="1379" y="1736">86-M23</text><text x="1395" y="1885">85-M22</text><text x="1438" y="1896">84-Choline</text>
            <text x="1476" y="1950">83</text><text x="1503" y="1964">82-His</text><text x="1562" y="1929">81</text>
            <text x="1599" y="1468">80</text><text x="1641" y="1468">79-M6</text><text x="1657" y="1468">78-M5</text>
            <text x="1816" y="1468">77-Putrescin</text><text x="1890" y="1468">75-Ornmerin</text>
            <text x="1956" y="1922">74</text><text x="2015" y="1985">73</text><text x="2048" y="2005">72-Asn</text><text x="2242" y="1468">71-Trimethyl</text>
            <text x="2376" y="1995">69-Asp</text><text x="2371" y="2005">70</text><text x="2497" y="1826">68-M4</text><text x="2592" y="1974">67</text><text x="2636" y="1856">66-Dimethyla</text>
            <text x="2721" y="1859">63-M3</text><text x="2707" y="1897">64-Asp</text><text x="2727" y="1927">62</text><text x="2697" y="1945">65</text><text x="2785" y="1987">61-Hypotau</text>
            <text x="2909" y="2016">60</text><text x="3040" y="1938">59</text><text x="3049" y="1927">58</text><text x="3259" y="1587">57</text><text x="3272" y="1544">56</text><text x="3363" y="1468">55-Succinat</text>
            <text x="3454" y="1901">54</text><text x="3494" y="1901">52-Glu</text><text x="3476" y="1911">53</text><text x="3534" y="1931">51</text><text x="3613" y="2002">50-Valine</text>
          </g>
          <path class="cursor" d="M2384 1307V2169"/>
          <text class="readout" x="125" y="1341">2.8155 ppm / 1689.7674 Hz</text>
          <text class="caption" x="161" y="1425">Annotated</text>
          <text class="caption" x="159" y="1528">representative spectrum</text>
        </svg>
      </section>
    </main>
  </div>
</div>
</body>
</html>
```
FILE: styles.css
```css
* { box-sizing: border-box; }
body { margin: 0; background: #fff; font-family: "Liberation Sans", Arial, sans-serif; }
svg { display: block; flex: none; }
button { border: 0; padding: 0; margin: 0; background: none; font: inherit; color: inherit; display: flex; align-items: center; justify-content: center; }
a { color: inherit; text-decoration: none; }
u { text-underline-offset: 4px; text-decoration-thickness: 2px; }
.app { margin: 36px 47px 46px 35px; background: #f0f5f8; }

.menubar { display: flex; height: 98px; background: #0067b5; border-top: 2px solid #0080c8; border-bottom: 2px solid #0077bd; }
.burger { width: 124px; flex-direction: column; gap: 6px; padding: 10px 0 0 6px; }
.burger span { width: 40px; height: 8px; background: #eef5fb; }
.menu { display: flex; padding-top: 5px; margin-bottom: -2px; }
.menu-item { display: flex; align-items: center; padding: 9px 36px 0; font-size: 35px; color: #dcebf8; }
.menu-item.active { background: #f0f5f8; color: #0b5a80; -webkit-text-stroke: 1px #0b5a80; }
.head-tools { margin-left: auto; display: flex; align-items: center; height: 96px; }
.head-btn { width: 68px; height: 60px; }
.help { color: #fff; font-size: 48px; font-weight: 700; }
.badge-num { font-size: 28px; fill: #d3e6f7; font-weight: 700; }
.brand { font: 700 33px "DejaVu Sans", sans-serif; fill: #fff; stroke: #fff; stroke-width: 1px; }

.toolbar { border-top: 2px solid #fff; }
.tool-row { display: flex; height: 89px; }
.commands { display: flex; padding-top: 7px; }
.cmd { position: relative; gap: 10px; padding: 0 30px 0 27px; font-size: 31px; color: #4a4a4a; }
.cmd.first { padding-left: 30px; }
.cmd::after { content: ""; position: absolute; right: 0; top: 20px; height: 40px; width: 2px; background: #d3d9e4; }
.caret { border: 8px solid transparent; border-top: 10px solid #000; border-bottom: 0; margin-top: 6px; }
.file-tools { margin-left: auto; display: flex; align-items: center; }
.icon-btn { width: 88px; height: 60px; }
.window-tools { display: flex; align-items: center; border-left: 3px solid #b9bcbe; padding-left: 5px; }
.window-tools .icon-btn { width: 82px; }
.view-row { display: flex; align-items: center; height: 77px; padding: 2px 0 0; }
.view-group { display: flex; align-items: center; padding: 0 12px 0 22px; position: relative; }
.view-group::after { content: ""; position: absolute; right: 0; top: 12px; height: 30px; width: 2px; background: #8db8cf; }
.view-btn { width: 53px; height: 54px; font-size: 36px; color: #4a4a4a; }
.view-btn.on { background: linear-gradient(#98c6d8, #9ab9c4); }

.workspace { display: flex; border-top: 9px solid #dfe2e5; }
.gutter { width: 22px; padding: 11px 0 0 4px; border-right: 3px solid #b5bbc0; }
.window { flex: 1; min-width: 0; }
.titlebar { display: flex; align-items: center; height: 53px; padding: 0 3px 3px 22px; border-top: 5px solid #a6a8aa; background: linear-gradient(#8ab0d0, #afd2ef); font-family: "Open Sans", sans-serif; font-size: 22px; color: #1d2733; }
.win-title { margin-left: 9px; margin-right: auto; white-space: nowrap; }
.win-btn { width: 58px; height: 35px; margin-left: 3px; border: 2px solid #7f9fbd; border-radius: 3px; background: linear-gradient(#b9d5ec 45%, #93b9da 55%, #b4d3ec); }
.win-btn.close { border-color: #9c3a34; background: linear-gradient(#ee9384 45%, #cf3a1d 55%, #e26b4e); }
.tabs { display: flex; height: 75px; padding: 7px 0 0 16px; font-size: 27px; color: #86a1ae; }
.tab { display: flex; align-items: center; padding-top: 4px; }
.tab.current { width: 182px; justify-content: center; border: 3px solid #4a90ad; border-bottom: 0; background: #fff; color: #00507c; font-weight: 700; }
.tab-rest { display: flex; gap: 25px; padding: 0 11px 0 9px; background: #d5e2e8; }

.pane { border: 8px solid #e00000; background: #fff; }
.pane.annotated { border-color: #6bd13f; }
.plot { width: 100%; height: auto; overflow: visible; }
.plot path, .plot polyline { fill: none; vector-effect: non-scaling-stroke; }
.shade { stroke: #8b8b8b; stroke-width: 3px; }
.frame-line { stroke: #666; stroke-width: 3px; }
.base-line { stroke: #999; stroke-width: 5px; }
.tick { stroke: #555; stroke-width: 3px; }
.axis { font-size: 25px; font-weight: 700; fill: #222; text-anchor: middle; }
.trace { stroke: #34345f; stroke-width: 3px; stroke-linejoin: round; }
.trees { stroke: #00f562; stroke-width: 3px; }
.trees path { opacity: .6; }
.peaks { font-family: "Liberation Mono", monospace; font-size: 22px; fill: #111; text-anchor: middle; }
.cursor { stroke: #00b4ee; stroke-width: 8px; }
.readout { font-size: 28px; fill: #444; }
.caption { font-size: 86px; font-weight: 700; fill: #e00000; }
.annotated .caption { fill: #6bd13f; }
```
